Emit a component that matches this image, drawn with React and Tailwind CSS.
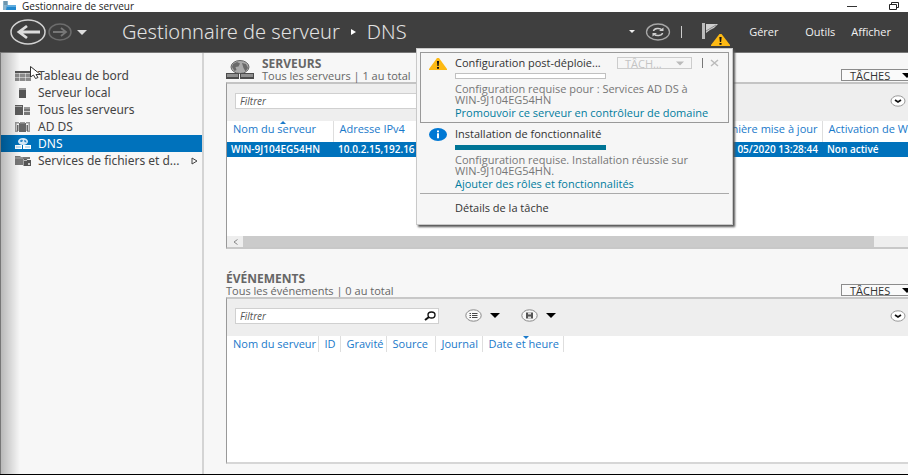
import React from "react";

const NAV = [
  { label: "Tableau de bord", icon: "dashboard" },
  { label: "Serveur local", icon: "server" },
  { label: "Tous les serveurs", icon: "servers" },
  { label: "AD DS", icon: "adds" },
  { label: "DNS", icon: "dns", active: true },
  { label: "Services de fichiers et d...", icon: "files", expandable: true },
];

function NavIcon({ name }) {
  return (
    <svg width="16" height="12" viewBox="0 0 16 12" className="shrink-0" aria-hidden="true">
      {name === "dashboard" && (
        <g fill="#8a8a8a">
          <rect x="0" y="1" width="16" height="2" fill="#555" />
          <rect x="0" y="3.500" width="4.500" height="3.500" />
          <rect x="5" y="3.500" width="5" height="3.500" />
          <rect x="10.500" y="3.500" width="5.500" height="3.500" />
          <rect x="0" y="7.500" width="4.500" height="3.500" />
          <rect x="5" y="7.500" width="5" height="3.500" />
          <rect x="10.500" y="7.500" width="5.500" height="3.500" />
        </g>
      )}
      {name === "server" && (
        <g>
          <rect x="4" y="1" width="7" height="10" fill="#555" />
          <rect x="4" y="1" width="7" height="2" fill="#999" />
        </g>
      )}
      {name === "servers" && (
        <g fill="#5c5c5c">
          <rect x="0" y="1" width="8" height="10" />
          <rect x="0" y="2" width="7" height="1" fill="#aaa" />
          <rect x="9" y="3" width="6" height="2" fill="#999" />
          <rect x="9" y="5" width="6" height="6" fill="#777" />
          <rect x="9" y="7" width="6" height="1" fill="#ccc" />
        </g>
      )}
      {name === "adds" && (
        <g fill="#666">
          <path d="M0 1h4v1.500H1.500v7H3V11H0zM15 1h-4v1.500h2.500v7H12V11h3z" fill="#999" />
          <rect x="4" y="2" width="7" height="9" />
          <rect x="5" y="1" width="5" height="1.500" fill="#999" />
          <rect x="2" y="4" width="1.500" height="6" />
          <rect x="11.500" y="4" width="1.500" height="6" />
        </g>
      )}
      {name === "dns" && (
        <g>
          <ellipse cx="8" cy="3.500" rx="5" ry="3.500" fill="#d8e9f7" />
          <path d="M5 2.500l2-1 1 1-1 1.500H5.500zM9 2l2 .5.500 2-2-.5z" fill="#2b86c8" />
          <path d="M0 7h7v4H0zM8 7h8v4H8z" fill="#fff" />
          <path d="M1 9h5M10 9h5" stroke="#6badde" strokeWidth=".8" />
        </g>
      )}
      {name === "files" && (
        <g fill="#777">
          <path d="M0 1h5l1 1h9v2H8v6H0z" />
          <path d="M0 3h8" stroke="#aaa" />
          <path d="M8.500 4h3l1 1H16v6H8.500z" fill="#555" />
          <path d="M9 5.500h3" stroke="#bbb" />
          <path d="M13 8h2v2h-2z" fill="#ccc" />
        </g>
      )}
    </svg>
  );
}

function Caret({ className }) {
  return (
    <svg width="10" height="5" viewBox="0 0 10 5" className={className} aria-hidden="true">
      <path d="M0 0h10L5 5z" fill="currentColor" />
    </svg>
  );
}

function Warning({ width, height }) {
  return (
    <svg width={width} height={height} viewBox="0 0 18 12" preserveAspectRatio="none" aria-hidden="true">
      <path d="M8 0h2l8 11v1H0v-1z" fill="#fdb913" />
      <path d="M7.900 3h2.200l-.5 5H8.400zM8 9h2v1.700H8z" fill="#111" />
    </svg>
  );
}

function TasksButton() {
  return (
    <button className="flex h-3 w-[67px] items-center justify-between overflow-hidden border border-r-0 border-[#8c8c8c] bg-[#fafafa] pl-2 text-[11px] leading-none text-[#333]">
      <span>TÂCHES</span>
      <Caret className="-mr-1 shrink-0 text-black" />
    </button>
  );
}

function Expand() {
  return (
    <button aria-label="Développer" className="mr-0.5 ml-auto">
      <svg width="16" height="12" viewBox="0 0 16 12" aria-hidden="true">
        <ellipse cx="8" cy="6" rx="7" ry="5.200" fill="#fff" stroke="#999" />
        <path d="M5 5l3 2 3-2" fill="none" stroke="#111" strokeWidth="1.700" />
      </svg>
    </button>
  );
}

function Filter({ id }) {
  return (
    <div className="flex h-4 w-[204px] shrink-0 items-center border border-[#d0d0d0] bg-white pr-0.5">
      <label htmlFor={id} className="sr-only">Filtrer</label>
      <input
        id={id}
        placeholder="Filtrer"
        className="h-[14px] min-w-0 flex-1 bg-transparent pl-1 text-[10px] leading-[14px] italic outline-none placeholder:text-[#555]"
      />
      <svg width="12" height="10" viewBox="0 0 12 10" aria-hidden="true">
        <ellipse cx="7.500" cy="4" rx="3.500" ry="3" fill="none" stroke="#111" strokeWidth="1.400" />
        <path d="M5 6L1 9" stroke="#111" strokeWidth="2" />
      </svg>
    </div>
  );
}

function RoundTool({ label, kind }) {
  return (
    <button aria-label={label} className="flex items-center gap-2 text-black">
      <svg width="17" height="13" viewBox="0 0 17 13" aria-hidden="true">
        <ellipse cx="8.500" cy="6.500" rx="7.700" ry="5.700" fill="#f8f8f8" stroke="#888" />
        {kind === "list" ? (
          <path d="M4.500 4.500h1.500M7 4.500h5.500M4.500 6.500h1.500M7 6.500h5.500M4.500 8.500h1.500M7 8.500h5.500" stroke="#444" />
        ) : (
          <g>
            <path d="M5 3.500h7v6H5z" fill="#555" />
            <path d="M7 3.500h3v2H7zM7 7.500h3v2H7z" fill="#ddd" />
          </g>
        )}
      </svg>
      <Caret />
    </button>
  );
}

function SortMark({ up }) {
  return (
    <svg width="6" height="3" viewBox="0 0 6 3" className="absolute top-0 left-1/2" aria-hidden="true">
      <path d={up ? "M0 3L3 0l3 3z" : "M0 0h6L3 3z"} fill="#1979ca" />
    </svg>
  );
}

function TitleBar() {
  return (
    <div className="flex h-3 items-center justify-between overflow-hidden bg-white pr-[9px] pl-[3px]">
      <div className="flex items-center gap-[6px]">
        <svg width="13" height="10" viewBox="0 0 13 10" aria-hidden="true">
          <path d="M0 0h5v9H0z" fill="#8db4cc" />
          <path d="M1 1h3M1 3h3" stroke="#50788f" />
          <path d="M4 4h9v5H3z" fill="#2389cf" />
          <path d="M4 5h9" stroke="#9cd0ef" />
        </svg>
        <span className="text-[10px] leading-3 text-[#222]">Gestionnaire de serveur</span>
      </div>
      <div className="flex items-center gap-8">
        <button aria-label="Réduire">
          <svg width="10" height="8" viewBox="0 0 10 8" aria-hidden="true">
            <path d="M0 4.500h10" stroke="#333" />
          </svg>
        </button>
        <button aria-label="Restaurer">
          <svg width="10" height="8" viewBox="0 0 10 8" aria-hidden="true">
            <path d="M.5 2.500h7v5h-7zM2.500 2V.5h7v5H8" fill="none" stroke="#222" />
          </svg>
        </button>
      </div>
    </div>
  );
}

function Header() {
  return (
    <header className="flex h-[41px] items-center border-b border-[#777] bg-[#3f3f3f] pl-[10px] text-white">
      <button aria-label="Précédent">
        <svg width="36" height="26" viewBox="0 0 36 26" aria-hidden="true">
          <ellipse cx="18" cy="13" rx="17" ry="12" fill="none" stroke="#d2d2d2" strokeWidth="1.500" />
          <path d="M9 13h21M17 7l-8 6 8 6" fill="none" stroke="#dcdcdc" strokeWidth="2.800" />
        </svg>
      </button>
      <button aria-label="Suivant" className="ml-0.5">
        <svg width="24" height="18" viewBox="0 0 24 18" aria-hidden="true">
          <ellipse cx="12" cy="9" rx="11" ry="8" fill="none" stroke="#6c6c6c" strokeWidth="1.500" />
          <path d="M5 9h13M13 5l5 4-5 4" fill="none" stroke="#777" strokeWidth="1.800" />
        </svg>
      </button>
      <button aria-label="Historique" className="ml-[5px]">
        <Caret className="text-[#ddd]" />
      </button>
      <h1 className="ml-[35px] flex items-center font-['Noto_Sans',sans-serif] text-[20px] font-light whitespace-nowrap text-[#e2e2e2]">
        <span>Gestionnaire de serveur</span>
        <svg width="5" height="6" viewBox="0 0 5 6" className="mx-[11px]" aria-hidden="true">
          <path d="M0 0l5 3-5 3z" fill="#fff" />
        </svg>
        <span>DNS</span>
      </h1>
      <div className="ml-auto flex items-center">
        <svg width="6" height="4" viewBox="0 0 6 4" aria-hidden="true">
          <path d="M0 0h6L3 3z" fill="#eee" />
        </svg>
        <button aria-label="Actualiser" className="ml-[10px]">
          <svg width="26" height="18" viewBox="0 0 26 18" aria-hidden="true">
            <ellipse cx="13" cy="9" rx="11.500" ry="8" fill="none" stroke="#a8a8a8" strokeWidth="1.300" />
            <path d="M8.500 8c.5-3 6.500-3.500 8.500-1M17.500 10c-.5 3-6.500 3.500-8.500 1" fill="none" stroke="#d0d0d0" strokeWidth="1.500" />
            <path d="M18.500 4.500v3.500h-4.500zM7.500 13.500V10H12z" fill="#d0d0d0" />
          </svg>
        </button>
        <span className="ml-[10px] h-3 w-px bg-[#ccc]" />
        <button aria-label="Notifications" className="relative ml-5 h-6 w-7">
          <svg width="18" height="17" viewBox="0 0 18 17" className="absolute top-[3px] left-0" aria-hidden="true">
            <path d="M0 0h3v16H0z" fill="#bcbcbc" />
            <path d="M4 1h12l-4 4-4 2-4 3z" fill="#cfcfcf" />
            <path d="M4 8l10-6" stroke="#8c8c8c" />
          </svg>
          <span className="absolute right-0 -bottom-0.5">
            <Warning width={19} height={12} />
          </span>
        </button>
        <nav className="ml-[19px] flex pr-[17px] text-[11px] text-[#f2f2f2]">
          <button className="w-14 text-left">Gérer</button>
          <button className="w-[46px] text-left">Outils</button>
          <button>Afficher</button>
        </nav>
      </div>
    </header>
  );
}

function Sidebar() {
  return (
    <nav className="relative w-[204px] shrink-0 border-r-2 border-[#d4d4d4] pt-[14px] font-['Noto_Sans',sans-serif] text-[12px] text-[#444]">
      {NAV.map((item) => (
        <a
          key={item.label}
          href="#"
          className={
            item.active
              ? "flex h-[17px] items-center gap-[7px] bg-[#0072bc] pl-[15px] leading-[17px] whitespace-nowrap text-white"
              : "flex h-[17px] items-center gap-[7px] pl-[15px] leading-[17px] whitespace-nowrap"
          }
        >
          <NavIcon name={item.icon} />
          <span>{item.label}</span>
          {item.expandable && (
            <svg width="7" height="8" viewBox="0 0 7 8" className="mr-1 ml-auto" aria-hidden="true">
              <path d="M1 1l5 3-5 3z" fill="none" stroke="#444" />
            </svg>
          )}
        </a>
      ))}
      <div className="pointer-events-none absolute inset-y-0 left-0 w-5 border-l border-[#777] bg-linear-to-r from-black/25 to-transparent" />
      <svg width="13" height="14" viewBox="0 0 13 14" className="absolute top-[13px] left-[30px]" aria-hidden="true">
        <path d="M.5.500v10.500l3-2 2 3.500 2.500-1-2-3h4.500z" fill="#fff" stroke="#333" />
      </svg>
    </nav>
  );
}

const TH = "relative border-r border-[#dedede] pl-[6px] text-left font-normal whitespace-nowrap overflow-hidden";

function Servers() {
  return (
    <section>
      <div className="flex h-[29px] items-end">
        <svg width="28" height="20" viewBox="0 0 28 20" className="mb-0.5" aria-hidden="true">
          <ellipse cx="14" cy="7" rx="9" ry="6.500" fill="#aaa" stroke="#666" />
          <path d="M7 4l4-2 3 1.500-1.500 3-3 .5 1 3-2 1-2.500-4zM16 3l4 1 2 4-2.500 3.500-2-3.500z" fill="#6a6a6a" />
          <path d="M0 13h13v6H0zM14 13h14v6H14z" fill="#4c4c4c" />
          <path d="M1 14h11v3H1zM15 14h12v3H15z" fill="#909090" />
        </svg>
        <div className="ml-2 text-[11px] leading-3 text-[#666]">
          <h2 className="text-[12px] font-bold">SERVEURS</h2>
          <p>Tous les serveurs | 1 au total</p>
        </div>
        <div className="mb-px ml-auto">
          <TasksButton />
        </div>
      </div>
      <div className="h-[167px] border-t-2 border-b-2 border-l border-t-[#c4c4c4] border-b-[#c8c8c8] border-l-[#999] bg-white">
        <div className="flex h-[37px] items-center bg-[#eee] pb-1 pl-2">
          <Filter id="filter-servers" />
          <Expand />
        </div>
        <table className="w-full table-fixed border-collapse text-[11px]">
          <colgroup>
            <col className="w-[106px]" />
            <col className="w-[120px]" />
            <col />
            <col className="w-[120px]" />
            <col className="w-[86px]" />
          </colgroup>
          <thead>
            <tr className="h-[21px] align-top leading-4 text-[#1979ca]">
              <th className={TH}>Nom du serveur<SortMark up /></th>
              <th className={TH}>Adresse IPv4</th>
              <th />
              <th className={TH}><span className="flex justify-end pr-1">Dernière mise à jour</span></th>
              <th className="overflow-hidden pl-[6px] text-left font-normal whitespace-nowrap">Activation de Windows</th>
            </tr>
          </thead>
          <tbody>
            <tr className="h-[15px] bg-[#0072bc] text-[10px] leading-[15px] font-semibold whitespace-nowrap text-white">
              <td className="pl-1">WIN-9J104EG54HN</td>
              <td className="overflow-hidden pl-[5px]">10.0.2.15,192.16</td>
              <td />
              <td className="pr-1 text-right">05/2020 13:28:44</td>
              <td className="pl-[5px]">Non activé</td>
            </tr>
          </tbody>
        </table>
        <div className="mt-[79px] flex h-[11px] bg-[#eee]">
          <button aria-label="Défiler à gauche" className="flex w-4 items-center justify-center">
            <svg width="5" height="6" viewBox="0 0 5 6" aria-hidden="true">
              <path d="M4.500.500L1 3l3.500 2.500" fill="none" stroke="#888" />
            </svg>
          </button>
          <div className="mr-[34px] flex-1 bg-[#cbcbcb]" />
        </div>
      </div>
    </section>
  );
}

function Events() {
  return (
    <section className="mt-6 flex flex-1 flex-col">
      <div className="flex items-end">
        <div className="text-[11px] leading-3 text-[#666]">
          <h2 className="text-[12px] font-bold">ÉVÉNEMENTS</h2>
          <p>Tous les événements | 0 au total</p>
        </div>
        <div className="mb-px ml-auto">
          <TasksButton />
        </div>
      </div>
      <div className="flex-1 border-t-2 border-b-2 border-l border-t-[#c8c8c8] border-b-[#d6d6d6] border-l-[#999] bg-white">
        <div className="flex h-[37px] items-center bg-[#eee] pb-1 pl-2">
          <Filter id="filter-events" />
          <div className="ml-[26px] flex gap-[21px]">
            <RoundTool label="Critères" kind="list" />
            <RoundTool label="Enregistrer" kind="save" />
          </div>
          <Expand />
        </div>
        <table className="w-[336px] table-fixed border-collapse text-[11px] text-[#1979ca]">
          <colgroup>
            <col className="w-[91px]" />
            <col className="w-[22px]" />
            <col className="w-[46px]" />
            <col className="w-[49px]" />
            <col className="w-[47px]" />
            <col className="w-[81px]" />
          </colgroup>
          <thead>
            <tr className="h-[16px] leading-4">
              <th className={TH}>Nom du serveur</th>
              <th className={TH}>ID</th>
              <th className={TH}>Gravité</th>
              <th className={TH}>Source</th>
              <th className={TH}>Journal</th>
              <th className={TH}>Date et heure<SortMark /></th>
            </tr>
          </thead>
        </table>
      </div>
    </section>
  );
}

function Notifications() {
  return (
    <aside className="absolute top-9 right-[175px] w-[317px] border border-[#c9c9c9] bg-[#f6f6f6] p-[3px] pb-2 text-[11px] text-[#333] shadow-[2px_2px_2px_#555]">
      <div className="flex border border-[#999] pr-[9px] pb-[2px] pl-2">
        <span className="mt-[5px] w-[26px] shrink-0">
          <Warning width={18} height={12} />
        </span>
        <div className="min-w-0 flex-1">
          <div className="flex h-5 items-center">
            <p className="whitespace-nowrap">Configuration post-déploie...</p>
            <button disabled className="ml-auto flex h-3 w-[75px] items-center justify-between border border-[#ccc] px-[7px] leading-none text-[#c4c4c4]">
              TÂCH...
              <Caret className="w-2 text-[#bbb]" />
            </button>
            <span className="ml-[10px] h-[10px] w-px bg-[#777]" />
            <button aria-label="Fermer" className="ml-[7px] text-[#bbb]">
              <svg width="9" height="8" viewBox="0 0 9 8" aria-hidden="true">
                <path d="M1 1l7 6M8 1L1 7" stroke="currentColor" strokeWidth="1.500" />
              </svg>
            </button>
          </div>
          <div className="h-[6px] w-[151px] border border-[#c0c0c0] bg-white" />
          <p className="mt-1 leading-[11px] whitespace-nowrap text-[#777]">
            Configuration requise pour : Services AD DS à<br />WIN-9J104EG54HN
          </p>
          <a href="#" className="mt-px block leading-[14px] whitespace-nowrap text-[#007c9e]">
            Promouvoir ce serveur en contrôleur de domaine
          </a>
        </div>
      </div>
      <div className="flex border-b border-[#aaa] pt-1 pb-[2px] pl-[9px]">
        <span className="mt-px w-[26px] shrink-0">
          <svg width="18" height="13" viewBox="0 0 18 13" aria-hidden="true">
            <ellipse cx="9" cy="6.500" rx="9" ry="6.500" fill="#0078d4" />
            <path d="M8 2.500h2v1.700H8zM8 5.200h2v5H8z" fill="#fff" />
          </svg>
        </span>
        <div>
          <p className="leading-[14px] whitespace-nowrap">Installation de fonctionnalité</p>
          <div className="mt-1 h-[5px] w-[151px] bg-[#007596]" />
          <p className="mt-1 leading-[11px] whitespace-nowrap text-[#777]">
            Configuration requise. Installation réussie sur<br />WIN-9J104EG54HN.
          </p>
          <a href="#" className="mt-px block leading-[14px] whitespace-nowrap text-[#007c9e]">
            Ajouter des rôles et fonctionnalités
          </a>
        </div>
      </div>
      <button className="mt-[6px] ml-[35px] block leading-4">Détails de la tâche</button>
    </aside>
  );
}

export default function App() {
  return (
    <div className="flex min-h-screen flex-col overflow-hidden border-b border-black bg-[#f7f7f7] font-['Open_Sans','Noto_Sans',sans-serif]">
      <TitleBar />
      <div className="relative flex flex-1 flex-col">
        <Header />
        <div className="flex flex-1">
          <Sidebar />
          <main className="flex min-w-0 flex-1 flex-col pb-[10px] pl-[22px]">
            <Servers />
            <Events />
          </main>
        </div>
        <Notifications />
      </div>
    </div>
  );
}
